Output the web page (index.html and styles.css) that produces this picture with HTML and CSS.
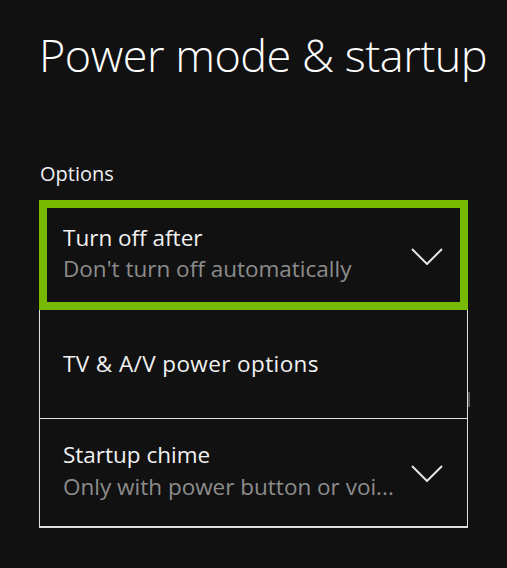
FILE: index.html
```html
<!DOCTYPE html>
<html>
<head>
<meta charset="utf-8">
<link rel="stylesheet" href="styles.css">
</head>
<body>
<div class="page">
  <h1 class="title">Power mode &amp; startup</h1>
  <div class="section-label">Options</div>
  <div class="list">
    <div class="item item-focused">
      <div class="texts texts-two">
        <div class="item-title">Turn off after</div>
        <div class="item-sub">Don't turn off automatically</div>
      </div>
      <svg class="chev" width="32" height="17" viewBox="0 0 32 17"><path d="M1 1 L16 16 L31 1" fill="none" stroke="#e6e6e6" stroke-width="2"/></svg>
    </div>
    <div class="item item-single">
      <div class="texts">
        <div class="item-title item-title-wide">TV &amp; A/V power options</div>
      </div>
    </div>
    <div class="item">
      <div class="texts texts-two">
        <div class="item-title">Startup chime</div>
        <div class="item-sub">Only with power button or voi...</div>
      </div>
      <svg class="chev" width="32" height="17" viewBox="0 0 32 17"><path d="M1 1 L16 16 L31 1" fill="none" stroke="#e6e6e6" stroke-width="2"/></svg>
    </div>
    <div class="thumb"></div>
  </div>
</div>
</body>
</html>
```
FILE: styles.css
```css
html, body {
  margin: 0;
  padding: 0;
  background: #111111;
}
body {
  width: 507px;
  height: 568px;
  overflow: hidden;
  font-family: "Open Sans", "Noto Sans", sans-serif;
  color: #f2f2f2;
}
.page {
  padding: 0 0 0 39px;
}
.title {
  margin: 0;
  padding-top: 23px;
  font-weight: 300;
  font-size: 45px;
  line-height: 64px;
  letter-spacing: -0.5px;
  white-space: nowrap;
  color: #ffffff;
}
.section-label {
  margin-top: 74px;
  font-size: 20px;
  line-height: 26px;
  padding-left: 1px;
  color: #f0f0f0;
}
.list {
  position: relative;
  margin-top: 13px;
  width: 427px;
  border: 1px solid #e0e0e0;
  border-top: none;
}
.item {
  box-sizing: border-box;
  height: 108px;
  display: flex;
  align-items: center;
  justify-content: space-between;
  padding: 0 24px 0 23px;
  border-bottom: 1px solid #e0e0e0;
}
.item:last-of-type {
  border-bottom: none;
  height: 108px;
}
.item-single {
  height: 109px;
}
.item-focused {
  height: 110px;
  margin: 0 -1px;
  border: 8px solid #77b900;
  padding: 0 17px 0 16px;
}
.texts-two {
  padding-bottom: 4px;
}
.item-title {
  font-size: 22.5px;
  line-height: 31.5px;
  color: #f2f2f2;
}
.item-title-wide {
  letter-spacing: 0.4px;
}
.item-sub {
  font-size: 22.5px;
  line-height: 31.5px;
  color: #8c8c8c;
}
.chev {
  display: block;
  flex: none;
  margin-top: 2px;
}
.thumb {
  position: absolute;
  right: -3px;
  top: 192px;
  width: 2px;
  height: 15px;
  background: #555555;
}
```
